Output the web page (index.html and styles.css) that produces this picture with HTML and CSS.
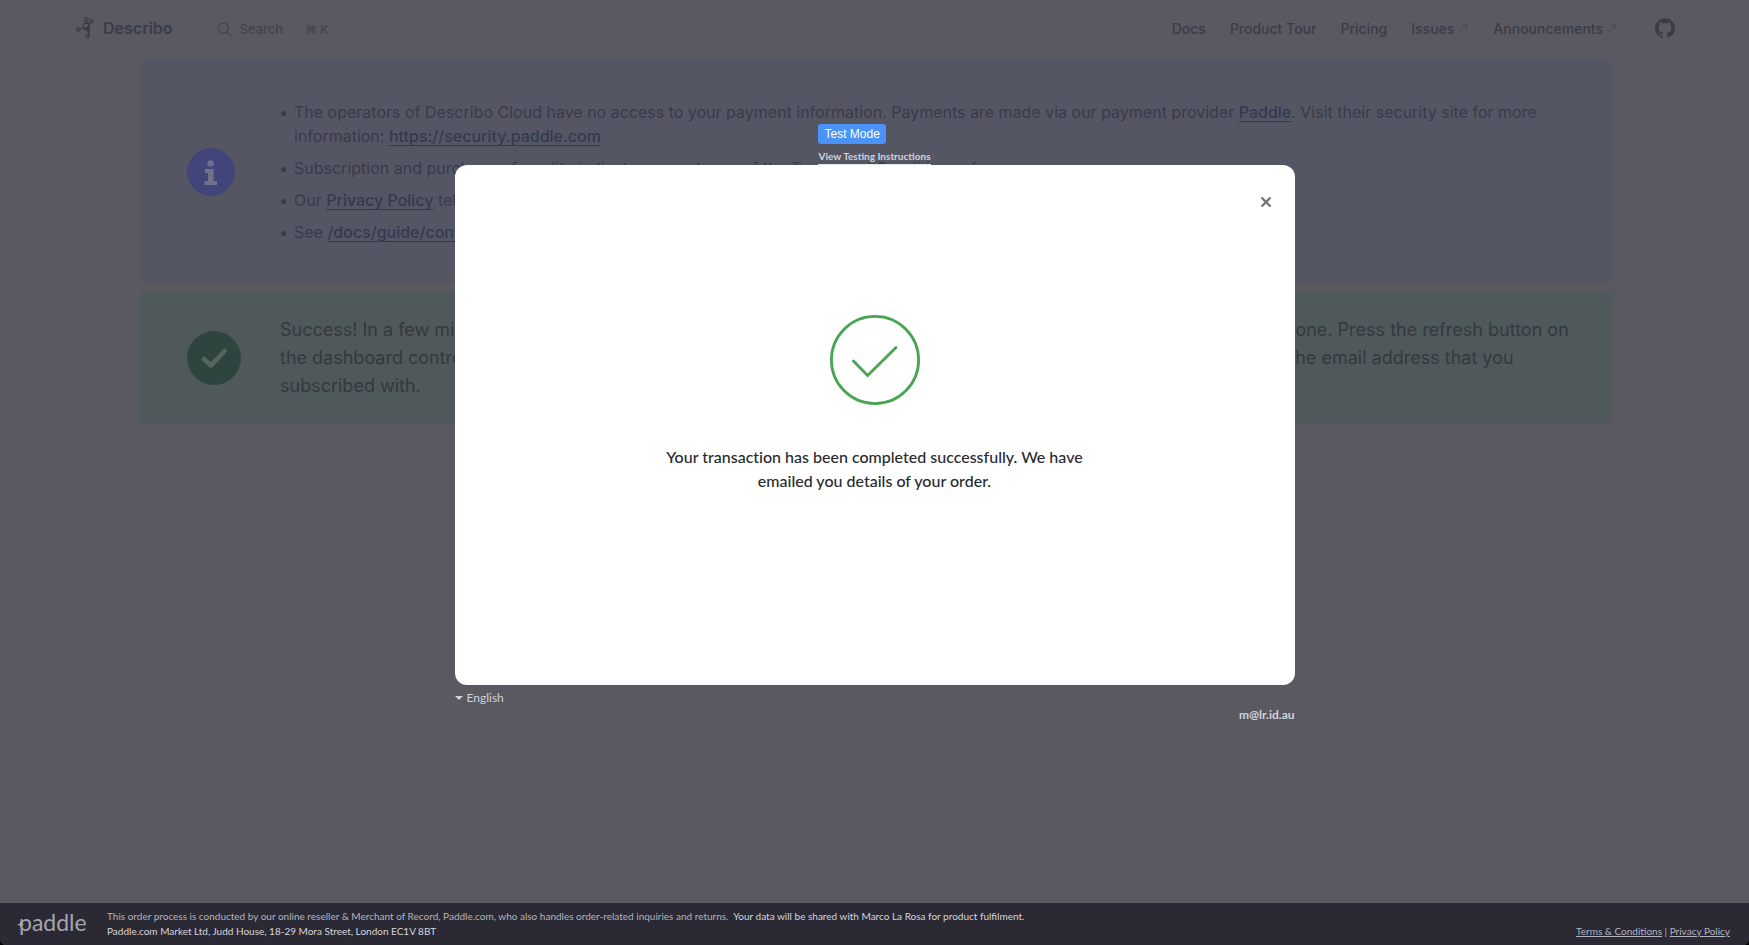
FILE: index.html
```html
<!DOCTYPE html>
<html lang="en">
<head>
<meta charset="utf-8">
<meta name="viewport" content="width=device-width, initial-scale=1">
<title>Describo</title>
<link rel="stylesheet" href="styles.css">
</head>
<body>
<div class="page">
  <header class="topbar">
    <a class="brand" href="#">
      <svg class="brand-mark" viewBox="0 0 18 22" aria-hidden="true">
        <g fill="none" stroke="currentColor" stroke-width="1.3">
          <circle cx="2.4" cy="12.3" r="1.7"/><circle cx="10.2" cy="9" r="3"/>
          <circle cx="10.5" cy="2.4" r="1.7"/><circle cx="15.8" cy="4" r="1.6"/>
          <circle cx="11.6" cy="19.6" r="1.5"/>
          <path d="M4.2 12.1L7.6 10.6M10.4 4.2V6M14.6 5.2L12.6 7.2"/>
        </g>
        <path d="M8.4 11.2L13.4 7.4L14 12.2L13.2 19.6L11.8 18L11.4 14.4L8 12.6Z" fill="currentColor"/>
      </svg>
      <span>Describo</span>
    </a>
    <button class="search" type="button">
      <svg class="search-icon" viewBox="0 0 20 20" aria-hidden="true"><circle cx="8.4" cy="8.4" r="6.8"/><path d="M13.4 13.4L18.6 18.6"/></svg>
      <span>Search</span>
      <span class="keys">⌘ K</span>
    </button>
    <nav class="nav">
      <a href="#">Docs</a>
      <a href="#">Product Tour</a>
      <a href="#">Pricing</a>
      <a href="#">Issues<svg class="ext" viewBox="0 0 11 11" aria-hidden="true"><path d="M2 9L8.6 2.4M4 2.2H8.8V7"/></svg></a>
      <a href="#">Announcements<svg class="ext" viewBox="0 0 11 11" aria-hidden="true"><path d="M2 9L8.6 2.4M4 2.2H8.8V7"/></svg></a>
    </nav>
    <a class="github" href="#" aria-label="GitHub">
      <svg viewBox="0 0 24 24" aria-hidden="true"><path fill="currentColor" d="M12 .297c-6.63 0-12 5.373-12 12 0 5.303 3.438 9.8 8.205 11.385.6.113.82-.258.82-.577 0-.285-.01-1.04-.015-2.04-3.338.724-4.042-1.61-4.042-1.61C4.422 18.07 3.633 17.7 3.633 17.7c-1.087-.744.084-.729.084-.729 1.205.084 1.838 1.236 1.838 1.236 1.07 1.835 2.809 1.305 3.495.998.108-.776.417-1.305.76-1.605-2.665-.3-5.466-1.332-5.466-5.93 0-1.31.465-2.38 1.235-3.22-.135-.303-.54-1.523.105-3.176 0 0 1.005-.322 3.3 1.23.96-.267 1.98-.399 3-.405 1.02.006 2.04.138 3 .405 2.28-1.552 3.285-1.23 3.285-1.23.645 1.653.24 2.873.12 3.176.765.84 1.23 1.91 1.23 3.22 0 4.61-2.805 5.625-5.475 5.92.42.36.81 1.096.81 2.22 0 1.606-.015 2.896-.015 3.286 0 .315.21.69.825.57C20.565 22.092 24 17.592 24 12.297c0-6.627-5.373-12-12-12"/></svg>
    </a>
  </header>

  <main class="content">
    <section class="notice info">
      <svg class="notice-icon" viewBox="0 0 48 48" aria-hidden="true"><circle cx="24" cy="24" r="24" fill="#424579"/><circle cx="23.6" cy="15.4" r="3.2" fill="#70728a"/><path d="M18 21h8.6v12H30v4H17.6v-4H21v-8h-3z" fill="#70728a"/></svg>
      <ul class="points">
        <li>The operators of Describo Cloud have no access to your payment information. Payments are made via our payment provider <a href="#">Paddle</a>. Visit their security site for more information: <a href="#">https://security.paddle.com</a></li>
        <li>Subscription and purchase of credits indicates acceptance of the Terms and Conditions of use.</li>
        <li>Our <a href="#">Privacy Policy</a> tells you how we use your data.</li>
        <li>See <a href="#">/docs/guide/contact</a> to get in touch.</li>
      </ul>
    </section>
    <section class="notice success">
      <svg class="notice-icon large" viewBox="0 0 54 54" aria-hidden="true"><circle cx="27" cy="27" r="27" fill="#2f443f"/><path d="M17 28L24 34.5L37.5 20" fill="none" stroke="#56635f" stroke-width="4.6" stroke-linecap="round" stroke-linejoin="round"/></svg>
      <p>Success! In a few minutes your hosted service will be created and you will see it here when the setup has finally been done. Press the refresh button on the dashboard control panel to see any progress. You will also receive a message when it is ready for you to access at the email address that you subscribed with.</p>
    </section>
  </main>

  <div class="overlay">
    <div class="checkout">
      <div class="test">
        <span class="badge">Test Mode</span>
        <a href="#">View Testing Instructions</a>
      </div>
      <div class="dialog" role="dialog" aria-label="Transaction completed">
        <button class="close" type="button" aria-label="Close"><svg viewBox="0 0 12 12" aria-hidden="true"><path d="M1.5 1.5L10.5 10.5M10.5 1.5L1.5 10.5"/></svg></button>
        <svg class="done" viewBox="0 0 90 90" aria-hidden="true"><circle cx="45" cy="45" r="43.6"/><path d="M23.4 46L37.6 60.5L66 32.4"/></svg>
        <p>Your transaction has been completed successfully. We have emailed you details of your order.</p>
      </div>
      <button class="language" type="button"><span class="caret"></span>English</button>
      <div class="email">m@lr.id.au</div>
    </div>
  </div>

  <footer class="legal">
    <a class="paddle" href="#">paddle<svg viewBox="0 0 8 8" aria-hidden="true"><path d="M4 0L5 3L8 4L5 5L4 8L3 5L0 4L3 3Z" fill="currentColor"/></svg></a>
    <div class="legal-text">
      <p>This order process is conducted by our online reseller &amp; Merchant of Record, Paddle.com, who also handles order-related inquiries and returns.&nbsp; <span>Your data will be shared with Marco La Rosa for product fulfilment.</span></p>
      <p><span>Paddle.com Market Ltd, Judd House, 18-29 Mora Street, London EC1V 8BT</span></p>
    </div>
    <div class="legal-links"><a href="#">Terms &amp; Conditions</a> | <a href="#">Privacy Policy</a></div>
  </footer>
</div>
</body>
</html>
```
FILE: styles.css
```css
* { box-sizing: border-box; }
html { background: #000; }
body { margin: 0; font-family: Inter, sans-serif; color: #3a3b48; }
a { color: inherit; }
p { margin: 0; }
button { font: inherit; color: inherit; background: none; border: 0; padding: 0; cursor: pointer; }

.page {
  position: relative;
  min-height: 100vh;
  display: flex;
  flex-direction: column;
  background: #5a5962;
  border-radius: 0 0 6px 6px;
  overflow: hidden;
}

.topbar {
  height: 60px;
  padding: 0 74px 4px 76px;
  display: flex;
  align-items: center;
}
.brand { display: flex; align-items: center; gap: 9px; font-size: 16px; font-weight: 600; text-decoration: none; }
.brand-mark { width: 18px; height: 22px; }
.search { display: flex; align-items: center; margin-left: 44px; padding-top: 2px; gap: 8px; font-size: 13px; font-weight: 500; color: #434350; }
.search-icon { width: 15px; height: 15px; fill: none; stroke: currentColor; stroke-width: 1.6; }
.keys { margin-left: 14px; font-size: 12px; }
.nav { display: flex; gap: 24px; margin-left: auto; font-size: 14px; font-weight: 500; }
.nav a { text-decoration: none; white-space: nowrap; }
.ext { width: 11px; height: 11px; margin-left: 4px; fill: none; stroke: #484854; stroke-width: 1; }
.github { display: flex; margin-left: 37px; }
.github svg { width: 20px; height: 20px; }

.content { flex: 1; padding: 0 138px 0 140px; }
.notice { display: flex; align-items: center; border-radius: 4px; }
.notice-icon { flex: none; width: 48px; height: 48px; }
.notice-icon.large { width: 54px; height: 54px; }
.info { padding: 40px 47px; gap: 45px; background: #545664; margin-bottom: 8px; }
.success { padding: 24px 38px 24px 47px; gap: 39px; background: #4f585b; font-size: 18px; line-height: 28px; color: #35393f; }
.points { flex: 1; margin: 0; padding: 0 0 0 14px; display: grid; gap: 8px; font-size: 16px; line-height: 24px; color: #393b4a; }
.points li { list-style: none; position: relative; }
.points li::before { content: ""; position: absolute; left: -13px; top: 11px; width: 5px; height: 5px; border-radius: 50%; background: currentColor; }
.points a { font-weight: 500; text-underline-offset: 3px; color: #343a50; }

.overlay { position: absolute; top: 0; left: 0; right: 0; padding-top: 124px; font-family: Lato, sans-serif; color: #d2d2dc; }
.checkout { max-width: 840px; margin: 0 auto; display: flex; flex-direction: column; }
.test { align-self: center; display: flex; flex-direction: column; align-items: flex-start; gap: 5px; }
.badge { padding: 0 6px; border-radius: 3px; background: #4b93f9; color: #fff; font: 12px/20px "Liberation Sans", sans-serif; }
.test a { font-size: 10px; line-height: 15px; font-weight: 700; text-decoration: none; border-bottom: 1px solid #e4e4ea; }
.dialog { position: relative; min-height: 520px; padding: 150px 200px 0; border-radius: 12px; background: #fff; color: #29292f; text-align: center; font-variant-ligatures: none; }
.dialog p { margin-top: 40px; font-size: 16px; line-height: 24px; font-weight: 500; }
.close { position: absolute; top: 31px; right: 23px; display: flex; }
.close svg { width: 12px; height: 12px; fill: none; stroke: #757575; stroke-width: 2.4; }
.done { display: block; width: 90px; height: 90px; margin: 0 auto; fill: none; stroke: #4aa553; stroke-width: 2.8; stroke-linecap: round; }
.language { align-self: flex-start; display: flex; align-items: center; gap: 4px; margin-top: 4px; font-size: 12px; line-height: 17px; }
.caret { border: 4px solid transparent; border-top-color: currentColor; border-bottom: 0; }
.email { align-self: flex-end; font-size: 12px; line-height: 17px; font-weight: 700; }

.legal {
  position: relative;
  min-height: 42px;
  padding: 6px 19px 6px;
  display: flex;
  background: #2b2933;
  font-family: Lato, sans-serif;
  font-size: 10px;
  line-height: 15px;
  color: #b4b3bd;
}
.paddle { position: relative; width: 88px; color: #a5a4b0; font-size: 23px; line-height: 26px; text-decoration: none; }
.paddle svg { position: absolute; left: -2px; top: 12px; width: 7px; height: 7px; }
.legal-text span { color: #d6d5de; }
.legal-links { margin-left: auto; align-self: flex-end; }
```
